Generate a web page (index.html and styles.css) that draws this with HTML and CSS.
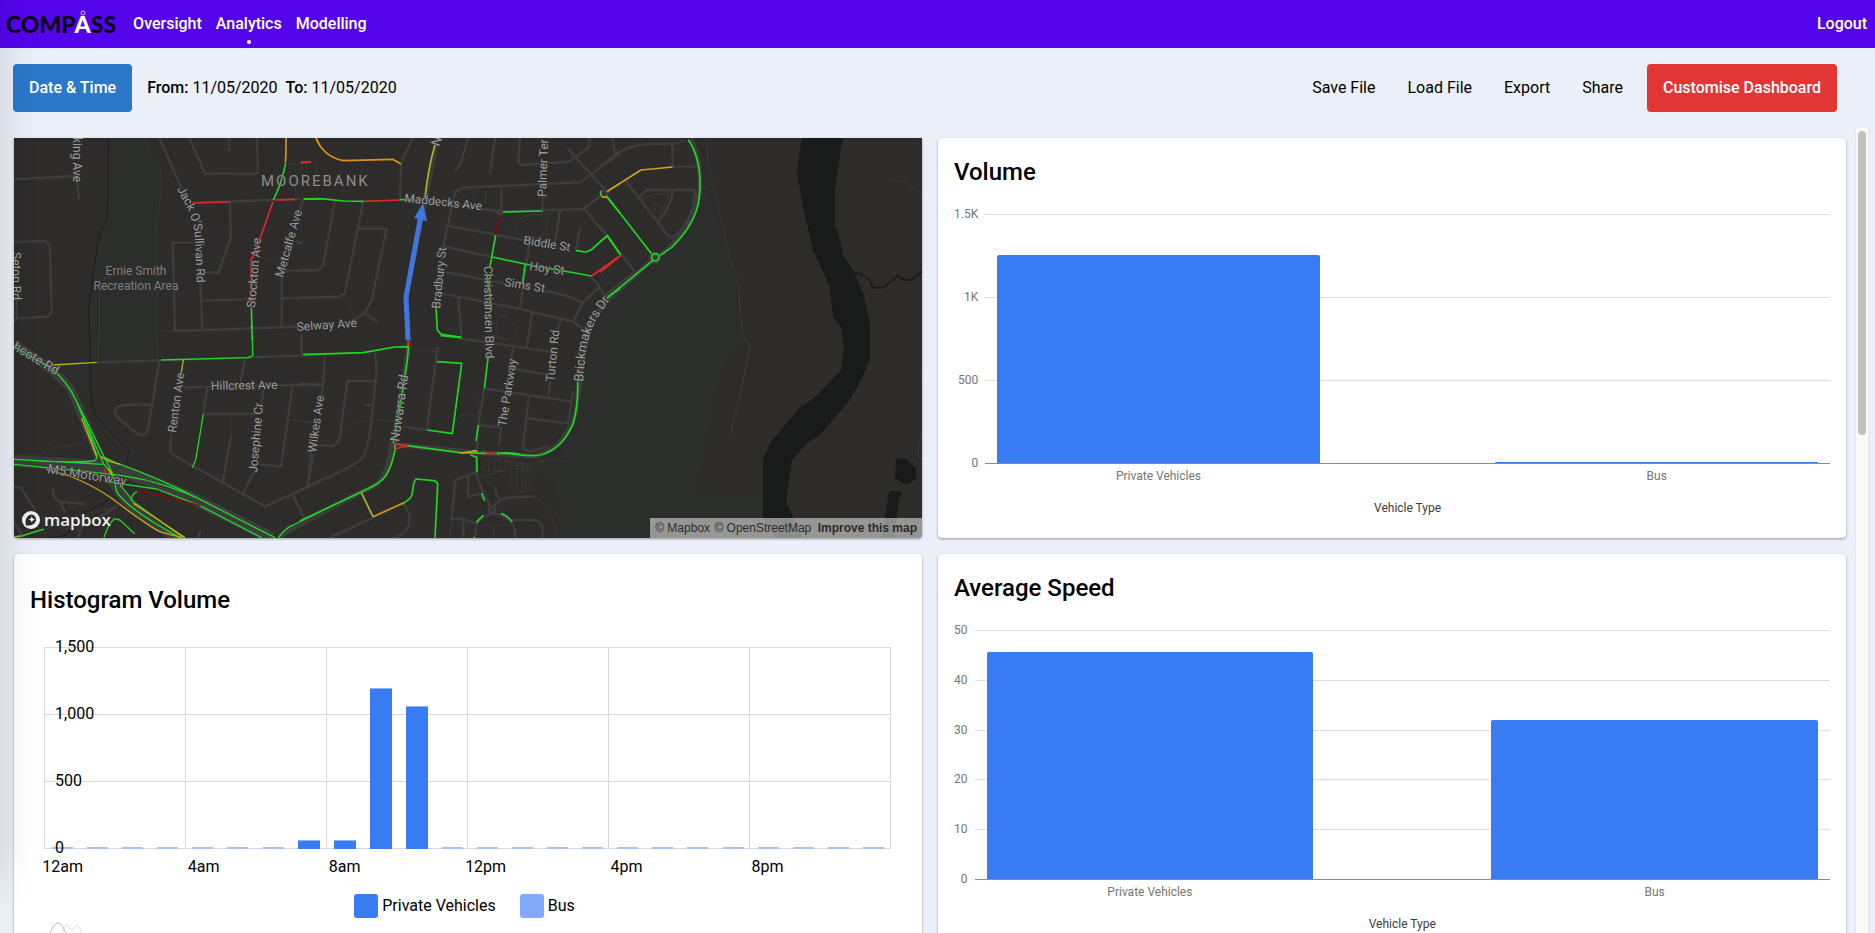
FILE: index.html
```html
<!DOCTYPE html>
<html lang="en">
<head>
<meta charset="utf-8">
<meta name="viewport" content="width=device-width, initial-scale=1">
<title>Compass Analytics</title>
<link rel="stylesheet" href="styles.css">
</head>
<body>
<header class="topbar">
  <a class="brand" href="#">COMP<span class="brand-a">A<svg class="brand-ring" viewBox="0 0 6 6" aria-hidden="true"><circle cx="3" cy="3" r="2" fill="none" stroke="#fff" stroke-opacity=".7"/></svg></span>SS</a>
  <nav class="nav">
    <a href="#">Oversight</a>
    <a href="#" class="active">Analytics</a>
    <a href="#">Modelling</a>
  </nav>
  <a class="logout" href="#">Logout</a>
</header>

<section class="toolbar">
  <button class="btn btn-blue" type="button">Date &amp; Time</button>
  <p class="range"><span><b>From:</b> 11/05/2020</span><span><b>To:</b> 11/05/2020</span></p>
  <div class="actions">
    <button class="link" type="button">Save File</button>
    <button class="link" type="button">Load File</button>
    <button class="link" type="button">Export</button>
    <button class="link" type="button">Share</button>
    <button class="btn btn-red" type="button">Customise Dashboard</button>
  </div>
</section>

<div class="scroller">
<main class="cards">
  <section class="card map">
    <svg class="map-art" viewBox="14 138 908 400" preserveAspectRatio="xMidYMid slice" role="img" aria-label="Traffic map of Moorebank">
      <defs>
        <path id="p-jack" d="M177 189L187 208Q195 224 195 240L197 290"/>
        <path id="p-brick" d="M583 382L586 350Q590 328 600 314L618 288"/>
      </defs>
      <rect x="14" y="138" width="908" height="400" fill="#2e2c2b"/>
      <!-- parkland -->
      <g fill="#2c2e2b">
        <path d="M108 138L107 218L98 238L88 310L90 361L155 360L157 225L162 190L160 170L144 138Z"/>
        <path d="M90 361L155 362L60 366L90 400L128 450L95 420Z"/>
        <path d="M698 190L712 202L735 280L741 340L721 370L697 492L763 499L763 538L560 538L553 480L500 465L560 455L578 430L583 365L605 300L655 260L690 225Z"/>
      </g>
      <path d="M802 138L799 157L797 173L803 207L813 250L830 288L833 317L841 327L844 348L841 370L813 399L799 408L771 442L763 459L763 518L775 538H803L786 502L792 460L807 443L820 435L850 400L862 378L870 359V323L863 293L854 272L843 255L839 235L835 225V190L841 147L844 138Z" fill="#191b1a"/>
      <path d="M896 458l10 1 10 9v11l-8 5-7-1-6-5zM889 491h12l2 3-4 4-5 40h-12z" fill="#191b1a"/>

      <!-- local roads -->
      <g fill="none" stroke="#3c3c3d" stroke-width="7" stroke-linejoin="round" stroke-linecap="round">
        <g transform="translate(0 130) scale(.333333)">
          <path d="M42 148L230 138L236 206M42 336L135 333L150 345L155 545L145 560L50 565L42 575M50 565V500M478 24L545 175M568 24L615 130L765 132L774 125L770 24M687 24V60M578 218L900 207M690 218L692 325L656 428H610M600 435L607 595M578 338H518L525 603L755 595L900 590M605 512L740 508M910 210L888 265M845 440V585M848 505L960 503M850 422H945L960 418M888 335L903 340"/>
          <path d="M860 100H935M870 100V140M887 100V205M905 100V140M920 100V140M950 100V140M298 630V470Q295 440 340 440M430 24Q450 85 480 115Q490 190 470 280V630M470 600L525 605M775 382Q820 390 835 402" stroke-width="3" opacity=".75"/>
          <path d="M325 24L322 265L295 325L265 540L270 630" stroke="#1c1c1b" stroke-width="3"/>
        </g>
        <g transform="translate(300 130) scale(.333333)">
          <path d="M338 24L303 100L300 210M505 24L480 105L467 120M585 24L570 130M660 24L655 100L665 105L810 95L868 50V24M805 57L925 190M960 70L840 157L490 173L465 185L430 350L415 490M380 210L600 245L850 237L905 195M603 245L605 172M728 240V200M443 287L670 330M433 350L570 380M430 425L610 460M735 483Q790 490 848 518L820 575L850 600M425 490L660 537L820 575M848 518L900 470L870 438M690 330L660 535M474 500L485 620M697 545L685 625M780 240L765 335M840 293L827 360M782 570L770 610M852 235L920 318M960 460L920 500M105 212L70 405L55 420H0M190 212L135 490L118 500L0 503M175 296H260L215 510L195 548L150 575M195 548L233 578"/>
          <path d="M465 190Q480 225 520 205V175M555 175L557 222M650 290C660 240 745 240 738 290C735 340 650 340 650 290ZM600 260Q620 300 640 275Q660 255 745 250L735 330M590 570C600 545 640 560 650 600C640 640 590 640 590 600ZM130 505L165 560M595 550a12 12 0 1 0 12-12" stroke-width="3" opacity=".7"/>
        </g>
        <g transform="translate(600 130) scale(.333333)">
          <path d="M0 110L45 72L38 24M45 72Q100 40 160 42L235 40L250 30M217 42L218 110H290M75 150L205 318L217 322L232 312Q285 255 285 180H140L118 200M218 185Q215 225 175 275M0 290L105 425L15 495L0 475"/>
          <path d="M318 24Q320 90 345 190L390 390L415 460L425 600L437 630M300 170L322 175L315 205H300M120 205Q165 190 210 190L172 270ZM150 205Q160 235 190 230M165 195V245M870 148Q930 155 955 180L966 205" stroke-width="3" opacity=".75"/>
          <path d="M762 425L798 440L815 460L817 473H850L893 437L915 450H933L966 425" stroke="#191b1a" stroke-width="5"/>
        </g>
        <g transform="translate(0 335) scale(.333333)">
          <path d="M290 82L960 60M478 78L457 210L440 295L425 302L410 295L345 240L347 220L365 210L455 208M555 157L880 150L960 148M622 157L610 237H770M735 70L722 140M790 165L783 215M780 388L843 395L878 150M693 305L668 443M513 300L510 350L520 360L795 514L960 440M760 415L727 478M940 360L925 447M880 482L910 548M905 60V0M42 455L65 460L105 525M158 465L165 490L180 500L195 530M180 500L250 507M42 560L70 608M600 590L595 608M235 608L243 580L350 515"/>
          <path d="M250 325L160 338L120 358L42 362M265 260L250 325M295 0V80M472 0V80M695 240V300M865 253L960 265M100 608L160 570L230 590L265 535L350 515L340 545" stroke-width="3" opacity=".75"/>
          <path d="M270 0L272 180L285 240L388 350L380 385M325 495L260 530L200 600L150 608" stroke="#1c1c1b" stroke-width="3"/>
        </g>
        <g transform="translate(300 335) scale(.333333)">
          <path d="M75 62L65 195M33 355L23 455L0 465M225 55Q235 100 222 180Q210 330 190 365Q175 385 100 420L20 455M225 138H142L120 300L115 320L100 332H55M197 210L215 212M0 145L65 150M0 520L10 545M5 0V55M413 38L380 285L310 275M553 160L535 270L527 410M480 10L750 50M640 35L630 80M685 0L680 35M645 103L740 118M553 160L815 200L803 265L685 250M687 185L668 340L690 350L740 335M745 185L750 140M535 270L603 278L598 328M815 200L820 170M90 608L310 505L330 540L325 575Q310 600 280 608M465 435L530 412Q535 450 575 520M465 435L455 555M505 425V485L545 475M455 552H490L530 565Q580 510 630 560Q650 580 645 608M530 562L525 608M490 555V608M575 520L600 495Q620 485 700 485M600 495L590 480L585 458M640 555H705Q725 560 728 580V608"/>
          <path d="M330 42L412 50M130 272Q200 245 310 262M550 385L560 372H610L622 380L615 410H555ZM565 372V410M583 372V410M600 372V410M632 390L695 395Q695 430 680 468L645 472L632 460ZM650 390V470M668 392V470M685 392L672 470M620 380L690 388Q740 370 800 377M470 435L450 608M700 485Q770 520 765 608M530 572H645M580 575V608M470 250Q500 230 535 245V180M540 425L620 405M582 0Q610 18 645 8M0 258L38 264" stroke-width="3" opacity=".65"/>
        </g>
        <g transform="translate(600 335) scale(.333333)" stroke-width="3">
          <path d="M430 0L450 38L420 180L390 302M966 100L958 118L966 128M966 290L955 335V365L966 375"/>
        </g>
      </g>

      <!-- main roads -->
      <g fill="none" stroke="#3c3c3d" stroke-width="5" stroke-linejoin="round">
        <path d="M690 138Q700 155 700 183Q700 215 672 245Q660 257 655 258L610 298Q595 312 588 335L582 360Q578 395 576 413Q562 455 530 456L470 452L392 444Q390 465 382 478Q375 488 361 492L290 530L278 538"/>
        <path d="M437 138L425 200L406 297L409 346L393 444"/>
        <path d="M14 344Q55 370 70 388C95 440 100 470 125 500Q150 525 178 538" stroke-width="9"/>
        <path d="M14 461L100 466Q150 478 200 502L272 538" stroke-width="12"/>
        <circle cx="500" cy="212" r="2" stroke-width="3"/>
        <circle cx="604" cy="193" r="3" stroke-width="3"/>
        <circle cx="655" cy="258" r="4"/>
        <circle cx="492" cy="510" r="3" stroke-width="3"/>
      </g>

      <!-- traffic -->
      <g fill="none" stroke="#1fd722" stroke-width="5" stroke-linejoin="round">
        <g transform="translate(0 130) scale(.333333)">
          <path d="M857 100Q845 160 820 210M754 535L757 630M910 207H960"/>
          <path d="M578 219L690 216M827 210L885 208M819 215L773 345L754 390V535M902 97L933 96" stroke="#e02a25"/>
          <path d="M858 24V70L856 98M948 24L960 48M755 587V593" stroke="#dc9118"/>
        </g>
        <g transform="translate(300 130) scale(.333333)">
          <path d="M12 207L62 206L130 213L190 214M300 209L345 210M609 246L728 243M587 315L570 410M576 381L690 405L875 438M675 405L668 460M828 362L858 366L873 360L922 317L960 372M408 535L412 600L422 612L484 622M920 200L960 250M905 183A11 11 0 0 0 905 198M560 430L575 540M960 475L925 500"/>
          <path d="M190 214L300 210M3 97L33 96M960 377L875 438" stroke="#e02a25"/>
          <path d="M598 255L587 315" stroke="#7e0c0c"/>
          <path d="M48 24Q70 80 130 92L278 88L303 102" stroke="#dc9118"/>
          <path d="M405 45Q385 110 375 205" stroke="#a9b81d"/>
          <path d="M960 160L922 184M905 198A11 11 0 0 0 922 198" stroke="#cda51b"/>
        </g>
        <g transform="translate(600 130) scale(.333333)">
          <path d="M265 30Q300 80 300 160Q300 210 290 240Q270 300 215 352L180 376M155 372L22 200M158 392L20 505M0 335L22 317L62 375"/>
          <circle cx="166" cy="382" r="11"/>
          <path d="M62 377L0 427" stroke="#e02a25"/>
          <path d="M22 184L123 120L218 111" stroke="#cda51b"/>
        </g>
        <g transform="translate(0 335) scale(.333333)" stroke-width="4">
          <path d="M483 75L745 68L758 62L757 0M910 58H960M610 237L587 375L577 398M42 35L155 100Q200 140 225 190L255 260L290 360M160 105Q205 145 225 190L340 420L350 470Q380 520 540 608M255 260L310 385L400 500L550 608M42 373Q200 385 280 378Q293 375 290 355M42 373L220 383L310 388M42 388L310 415Q440 425 560 475L600 493M310 365L345 382Q480 430 600 493L825 608M320 440L470 462L600 512L785 608M412 470Q390 480 396 500M835 608Q860 575 880 570L960 530M312 608Q325 565 343 551L360 555L404 596M55 606L132 582"/>
          <path d="M160 90L290 82M550 75L542 125" stroke="#b3b41d"/>
          <path d="M245 250L290 365M303 365L330 380L360 388M200 420Q280 450 335 490Q440 570 480 590L545 608M400 505L555 608M42 608L60 602M325 400L338 425M140 403L200 420" stroke="#cda51b"/>
          <path d="M312 402L325 425" stroke="#e02a25"/>
          <path d="M412 470L480 480L602 512" stroke="#7e0c0c"/>
        </g>
        <g transform="translate(300 335) scale(.333333)">
          <path d="M10 59L190 53L285 36L325 35Q325 70 302 200L280 325M422 2L484 8M411 80L485 85L457 296L382 285M565 62L553 160M535 270L528 318M833 140Q835 210 820 265Q785 345 720 360Q690 365 630 356L590 354M590 357Q620 350 660 358M285 330V345Q270 420 240 440Q230 450 185 470L0 558M322 332L480 353L560 355M310 505Q335 490 337 475Q340 440 348 432L400 437Q413 440 413 450L405 608M512 360L530 367L531 412M545 475L554 497M529 563L550 540M603 535Q625 545 637 560M520 608H525"/>
          <path d="M325 18V34M320 332L280 326M325 332L285 342M556 355H588" stroke="#e02a25"/>
          <path d="M480 354L515 350L522 347L532 350" stroke="#cda51b"/>
          <path d="M184 473L219 545" stroke="#b3b41d"/>
          <path d="M219 545L312 503" stroke="#dc9118"/>
        </g>
      </g>

      <!-- selected route -->
      <path d="M408 340L406 297L421 215" fill="none" stroke="#4076dd" stroke-width="5"/>
      <path d="M423 203L414 218L427 221Z" fill="#4076dd"/>

      <!-- labels -->
      <g class="map-labels">
        <text class="suburb" x="261" y="186">MOOREBANK</text>
        <text x="136" y="275" text-anchor="middle" class="area">Ernie Smith</text>
        <text x="136" y="290" text-anchor="middle" class="area">Recreation Area</text>
        <text transform="translate(73 182) rotate(90)" text-anchor="end">king Ave</text>
        <text transform="translate(12 252) rotate(90)">Seton Rd</text>
        <text><textPath href="#p-jack">Jack O'Sullivan Rd</textPath></text>
        <text transform="translate(283 278) rotate(-74)">Metcalfe Ave</text>
        <text transform="translate(255 308) rotate(-85)">Stockton Ave</text>
        <text transform="translate(297 331) rotate(-4)">Selway Ave</text>
        <text transform="translate(211 390) rotate(-1)">Hillcrest Ave</text>
        <text transform="translate(176 433) rotate(-82)">Renton Ave</text>
        <text transform="translate(257 473) rotate(-85)">Josephine Cr</text>
        <text transform="translate(316 453) rotate(-82)">Wilkes Ave</text>
        <text class="major" transform="translate(399 442) rotate(-82)">Nuwarra Rd</text>
        <text transform="translate(404 202) rotate(6)">Maddecks Ave</text>
        <text transform="translate(440 309) rotate(-84)">Bradbury St</text>
        <text transform="translate(523 244) rotate(9)">Biddle St</text>
        <text transform="translate(529 270) rotate(8)">Hoy St</text>
        <text transform="translate(504 286) rotate(9)">Sims St</text>
        <text transform="translate(484 266) rotate(89)">Christiansen Blvd</text>
        <text transform="translate(506 427) rotate(-81)">The Parkway</text>
        <text transform="translate(554 382) rotate(-84)">Turton Rd</text>
        <text class="major"><textPath href="#p-brick">Brickmakers Dr</textPath></text>
        <text transform="translate(546 197) rotate(-88)">Palmer Ter</text>
        <text class="major" transform="translate(439 147) rotate(-70)">N</text>
        <text class="major" transform="translate(12 349) rotate(31)">hcote Rd</text>
        <text class="major" transform="translate(47 473) rotate(9)">M5 Motorway</text>
      </g>
    </svg>
    <a class="mapbox" href="#">
      <svg viewBox="0 0 20 20" aria-hidden="true"><circle cx="10" cy="10" r="9" fill="#f0f0f0"/><path d="M5 15.500C3.500 10.500 5.500 5 10.500 4.500A5 5 0 0 1 15 10.500C14 14.500 9.500 16 5 15.500Z" fill="#2e2c2b"/><path d="M10.800 6.200l1 2.200 2.200 1-2.200 1-1 2.200-1-2.200-2.200-1 2.200-1z" fill="#f0f0f0"/></svg>
      mapbox
    </a>
    <p class="attribution"><a href="#">© Mapbox</a> <a href="#">© OpenStreetMap</a> <a href="#" class="improve">Improve this map</a></p>
  </section>

  <section class="card">
    <h2>Volume</h2>
    <div class="barchart">
      <ul class="ticks"><li>1.5K</li><li>1K</li><li>500</li><li>0</li></ul>
      <div class="plot">
        <div class="lines"><i></i><i></i><i></i><i></i></div>
        <div class="bars"><div class="bar" style="height:83.4%"></div><div class="bar" style="height:0.4%"></div></div>
      </div>
      <div class="cats"><span>Private Vehicles</span><span>Bus</span></div>
      <p class="axis-title">Vehicle Type</p>
    </div>
  </section>

  <section class="card histogram">
    <h2>Histogram Volume</h2>
    <div class="hist">
      <div class="hist-plot">
        <div class="hist-cols"><i></i><i></i><i></i><i></i><i></i><i></i></div>
        <div class="lines"><i></i><i></i><i></i><i></i></div>
        <div class="hours">
          <b></b><b></b><b></b><b></b><b></b><b></b><b></b>
          <b class="on" style="height:4.5%"></b><b class="on" style="height:4.5%"></b><b class="on" style="height:79.6%"></b><b class="on" style="height:71%"></b>
          <b></b><b></b><b></b><b></b><b></b><b></b><b></b><b></b><b></b><b></b><b></b><b></b><b></b>
        </div>
        <ul class="hist-ticks"><li>1,500</li><li>1,000</li><li>500</li><li>0</li></ul>
      </div>
      <div class="hist-times"><span>12am</span><span>4am</span><span>8am</span><span>12pm</span><span>4pm</span><span>8pm</span></div>
      <ul class="legend"><li class="private">Private Vehicles</li><li class="bus">Bus</li></ul>
      <svg class="chart-mark" viewBox="0 0 40 22" aria-hidden="true" fill="none" stroke-linecap="round"><path d="M16 14C20 6 21 3 23 3S26 8 28 8S31 3 33 3S36 8 39 14" stroke="#ddd"/><path d="M1 20C6 12 9 1 14 1S21 11 27 20" stroke="#bbb"/></svg>
    </div>
  </section>

  <section class="card">
    <h2>Average Speed</h2>
    <div class="barchart">
      <ul class="ticks"><li>50</li><li>40</li><li>30</li><li>20</li><li>10</li><li>0</li></ul>
      <div class="plot">
        <div class="lines"><i></i><i></i><i></i><i></i><i></i><i></i></div>
        <div class="bars"><div class="bar" style="height:91%"></div><div class="bar" style="height:64%"></div></div>
      </div>
      <div class="cats"><span>Private Vehicles</span><span>Bus</span></div>
      <p class="axis-title">Vehicle Type</p>
    </div>
  </section>
</main>
<div class="track" aria-hidden="true"><div class="thumb"></div></div>
</div>
<div class="drawer-edge" aria-hidden="true"></div>
</body>
</html>
```
FILE: styles.css
```css
* { box-sizing: border-box; margin: 0; padding: 0; }
body {
  display: flex;
  flex-direction: column;
  height: 100vh;
  overflow: hidden;
  background: #ebeff7;
  color: #000;
  font: 16px/24px Roboto, sans-serif;
}
ul { list-style: none; }
a { color: inherit; text-decoration: none; }
button { font: inherit; border: 0; background: none; cursor: pointer; }

.topbar {
  flex: none;
  display: flex;
  align-items: center;
  height: 48px;
  padding: 0 8px 0 6px;
  background: #5405ec;
  color: #fff;
  font-weight: 500;
}
.brand { color: #0b0716; font: 900 23px/24px Lato, sans-serif; }
.brand-a { position: relative; color: #fff; }
.brand-ring { position: absolute; top: 0; left: 50%; width: 6px; height: 6px; margin-left: -3px; }
.nav { display: flex; gap: 14px; margin-left: 17px; }
.nav a { position: relative; }
.active::after {
  content: "";
  position: absolute;
  left: 50%;
  bottom: -8px;
  width: 4px;
  height: 4px;
  margin-left: -2px;
  border-radius: 50%;
  background: #fff;
}
.logout { margin-left: auto; }

.toolbar {
  flex: none;
  display: flex;
  align-items: center;
  height: 80px;
  padding: 0 38px 0 13px;
}
.btn { height: 48px; padding: 0 16px; border-radius: 4px; color: #fff; font-weight: 500; }
.btn-blue { background: #2b78c9; }
.btn-red { background: #e23636; }
.range { display: flex; gap: 8px; margin-left: 15px; }
.range b { font-weight: 500; }
.actions { display: flex; align-items: center; gap: 16px; margin-left: auto; }
.link { padding: 0 8px; }

.scroller { flex: 1; min-height: 0; display: flex; overflow: hidden; padding-right: 6px; }
.cards {
  flex: 1;
  min-width: 0;
  display: grid;
  grid-template-columns: 1fr 1fr;
  grid-auto-rows: 400px;
  gap: 16px;
  padding: 10px 9px 16px 14px;
}
.track { flex: none; width: 14px; padding: 3px 2px; background: #fafafa; border: solid #e6e6e6; border-width: 0 1px; }
.thumb { height: 304px; border-radius: 4px; background: #c1c1c1; }

.card {
  position: relative;
  padding: 16px;
  border-radius: 4px;
  background: #fff;
  box-shadow: 0 1px 3px rgba(0, 0, 0, 0.2), 0 1px 2px rgba(0, 0, 0, 0.2);
}
h2 { font-size: 24px; line-height: 36px; font-weight: 500; }

.map { padding: 0; overflow: hidden; border-radius: 0 0 4px 4px; }
.map-art { display: block; width: 100%; height: 100%; }
.map-labels {
  fill: #9c9c9c;
  font-size: 12px;
  paint-order: stroke;
  stroke: #2e2c2b;
  stroke-width: 1px;
}
.map-labels .major { font-size: 13px; }
.map-labels .area { fill: #808080; }
.map-labels .suburb { fill: #8d8d8d; font-size: 15px; letter-spacing: 2px; }
.mapbox {
  position: absolute;
  left: 7px;
  bottom: 8px;
  display: flex;
  align-items: center;
  gap: 3px;
  color: #f0f0f0;
  font: 600 17px/20px "Open Sans", sans-serif;
}
.mapbox svg { width: 20px; height: 20px; }
.attribution {
  position: absolute;
  right: 0;
  bottom: 0;
  padding: 0 5px;
  background: rgba(255, 255, 255, 0.5);
  color: #2b2b2b;
  font: 12px/20px "Liberation Sans", Arial, sans-serif;
}
.attribution a + a { margin-left: 1px; }
.attribution .improve { font-weight: 700; margin-left: 3px; }

.barchart {
  display: grid;
  grid-template-columns: auto 1fr;
  grid-template-rows: 250px auto auto;
  column-gap: 7px;
  padding-top: 24px;
  font-size: 12px;
}
.ticks { display: flex; flex-direction: column; justify-content: space-between; color: #757575; text-align: right; }
.ticks li { height: 1px; line-height: 1px; }
.plot { display: grid; }
.lines, .bars { grid-area: 1 / 1; display: flex; }
.lines { flex-direction: column; justify-content: space-between; }
.lines i { height: 1px; background: #dcdcdc; }
.plot .lines i:last-child { background: #8c8c8c; }
.bars { align-items: flex-end; justify-content: space-between; padding: 0 12px 1px; }
.bar { width: 39.3%; min-height: 1px; border-radius: 2px 2px 0 0; background: #397bf2; }
.cats { grid-column: 2; display: flex; justify-content: space-between; padding: 0 12px; color: #757575; }
.cats span { width: 39.3%; text-align: center; }
.axis-title { grid-column: 2; padding-top: 8px; text-align: center; color: #3c3c3c; }

.histogram { padding-top: 28px; }
.hist { padding: 29px 15px 0 14px; }
.hist-plot { display: grid; grid-template-rows: 202px; }
.hist-cols, .hist-plot .lines, .hours, .hist-ticks { grid-area: 1 / 1; }
.hist-cols { display: grid; grid-template-columns: repeat(6, 1fr); border-right: 1px solid #d9d9d9; }
.hist-cols i { border-left: 1px solid #d9d9d9; }
.hist-plot .lines i, .hist-plot .lines i:last-child { background: #d9d9d9; }
.hours { display: flex; align-items: flex-end; justify-content: space-around; padding-left: 1px; }
.hours b { width: 21px; height: 2px; background: #a9c2f2; }
.hours .on { width: 22px; background: #397bf2; border-top: 1px solid #8fb4f6; }
.hist-ticks { display: flex; flex-direction: column; justify-content: space-between; padding-left: 11px; }
.hist-ticks li { height: 1px; line-height: 0; }
.hist-times { display: grid; grid-template-columns: repeat(24, 1fr); padding: 6px 0 0 1px; }
.hist-times span { display: flex; justify-content: center; white-space: nowrap; min-width: 0; }
.hist-times span:nth-child(1) { grid-column: 1; }
.hist-times span:nth-child(2) { grid-column: 5; }
.hist-times span:nth-child(3) { grid-column: 9; }
.hist-times span:nth-child(4) { grid-column: 13; }
.hist-times span:nth-child(5) { grid-column: 17; }
.hist-times span:nth-child(6) { grid-column: 21; }
.legend { display: flex; justify-content: center; gap: 24px; padding: 15px 6px 0 0; }
.legend li { display: flex; align-items: center; gap: 4px; }
.legend li::before { content: ""; width: 24px; height: 24px; border-radius: 3px; }
.private::before { background: #397bf2; }
.bus::before { background: #81abf8; }
.chart-mark { display: block; width: 40px; height: 22px; margin-top: 4px; }

.drawer-edge {
  position: fixed;
  top: 0;
  bottom: 50px;
  left: -40px;
  width: 40px;
  box-shadow: 0 0 40px rgba(0, 0, 0, 0.15);
  pointer-events: none;
}
```
